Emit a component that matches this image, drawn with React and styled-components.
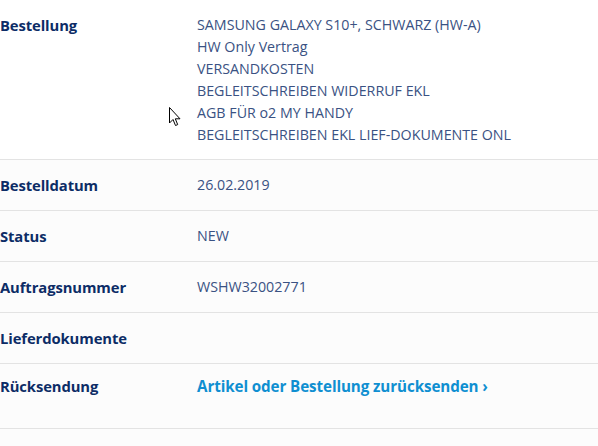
import React from 'react'
import styled, { createGlobalStyle } from 'styled-components'

const GlobalStyle = createGlobalStyle`
  body {
    margin: 0;
    background: #fcfcfc;
    font-family: "Open Sans", "Noto Sans", sans-serif;
  }
`

const Table = styled.div`
  position: relative;
  width: 598px;
`

const paddings = {
  first: '14px 0 13px',
  normal: '14px 0',
  tall: '11px 0 31px',
}

const Row = styled.div`
  display: grid;
  grid-template-columns: 197px 1fr;
  padding: ${p => paddings[p.kind || 'normal']};
  border-bottom: 1px solid #e3e3e3;
  background: ${p => (p.kind === 'first' ? '#ffffff' : '#fcfcfc')};
`

const Label = styled.div`
  font-size: 14.8px;
  font-weight: 700;
  line-height: 22px;
  color: #0c2c66;
  letter-spacing: -0.1px;
  white-space: nowrap;
`

const Value = styled.div`
  display: flex;
  flex-direction: column;
  font-size: 14.25px;
  line-height: 22px;
  color: #3a5283;
  white-space: nowrap;
`

const Link = styled.a`
  font-size: 15.2px;
  font-weight: 700;
  line-height: 22px;
  color: #0f8fd1;
  text-decoration: none;
  letter-spacing: -0.1px;
  white-space: nowrap;
`

const Cursor = styled.svg`
  position: absolute;
  left: 169px;
  top: 107px;
`

const items = [
  'SAMSUNG GALAXY S10+, SCHWARZ (HW-A)',
  'HW Only Vertrag',
  'VERSANDKOSTEN',
  'BEGLEITSCHREIBEN WIDERRUF EKL',
  'AGB FÜR o2 MY HANDY',
  'BEGLEITSCHREIBEN EKL LIEF-DOKUMENTE ONL',
]

export default function App() {
  return (
    <>
      <GlobalStyle />
      <Table>
        <Row kind="first">
          <Label>Bestellung</Label>
          <Value>
            {items.map(i => (
              <span key={i}>{i}</span>
            ))}
          </Value>
        </Row>
        <Row>
          <Label>Bestelldatum</Label>
          <Value>26.02.2019</Value>
        </Row>
        <Row>
          <Label>Status</Label>
          <Value>NEW</Value>
        </Row>
        <Row>
          <Label>Auftragsnummer</Label>
          <Value>WSHW32002771</Value>
        </Row>
        <Row>
          <Label>Lieferdokumente</Label>
          <Value />
        </Row>
        <Row kind="tall">
          <Label>Rücksendung</Label>
          <div>
            <Link href="#">Artikel oder Bestellung zurücksenden ›</Link>
          </div>
        </Row>
        <Cursor width="12" height="20" viewBox="0 0 12 20">
          <path
            d="M0.5 0.5 L0.5 16 L4 12.5 L6.5 18.5 L8.7 17.6 L6.3 11.8 L11 11.8 Z"
            fill="#fff"
            stroke="#000"
            strokeWidth="1"
            strokeLinejoin="miter"
          />
        </Cursor>
      </Table>
    </>
  )
}
